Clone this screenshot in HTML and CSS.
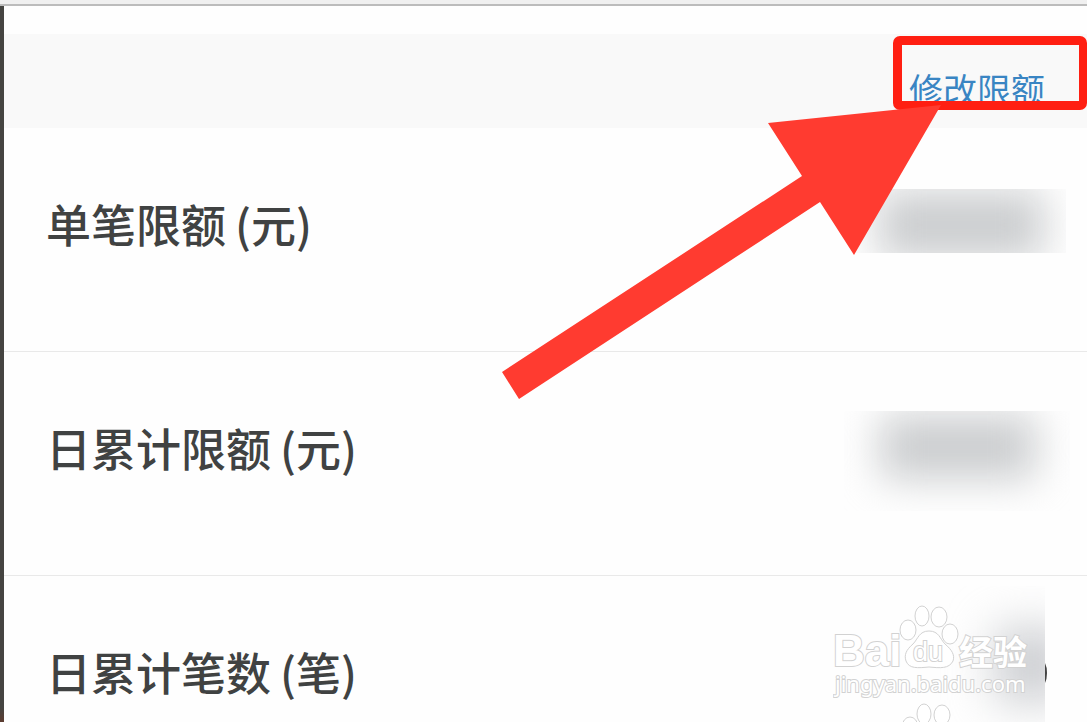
FILE: index.html
```
<!DOCTYPE html>
<html lang="zh-CN">
<head>
<meta charset="utf-8">
<title>修改限额</title>
<link rel="stylesheet" href="styles.css">
</head>
<body>
<div class="window-edge"></div>
<div class="frame">
  <div class="backdrop"></div>
  <main class="sheet">
    <header class="toolbar">
      <a class="edit-link" href="#">修改限额</a>
      <span class="highlight"></span>
    </header>
    <ul class="limits">
      <li class="limit">
        <span class="label">单笔限额<span class="unit">(元)</span></span>
        <span class="masked masked-single"><span class="smudge"></span></span>
      </li>
      <li class="limit">
        <span class="label">日累计限额<span class="unit">(元)</span></span>
        <span class="masked masked-daily"><span class="smudge"></span></span>
      </li>
      <li class="limit">
        <span class="label">日累计笔数<span class="unit">(笔)</span></span>
        <span class="masked masked-count"><span class="smudge"></span></span>
        <svg class="digit-edge" width="3" height="20" viewBox="0 0 3 20"><path d="M0 0Q2 4 2 10T0 20Z" fill="#444"/></svg>
      </li>
    </ul>
  </main>
</div>
<svg class="arrow" width="439" height="299" viewBox="0 0 439 299" aria-hidden="true">
  <path d="M439 5L266 23L300 76L0 272L17 299L318 102L352 155Z" fill="#ff3b30"/>
</svg>
<svg class="watermark" width="200" height="122" viewBox="0 0 200 122">
  <g class="outline">
    <text class="brand" x="0" y="66">Bai</text>
    <ellipse cx="75" cy="30" rx="8" ry="10"/>
    <ellipse cx="89" cy="16" rx="7" ry="10"/>
    <ellipse cx="106" cy="17" rx="8" ry="10"/>
    <ellipse cx="117" cy="34" rx="8" ry="10"/>
    <path d="M96 31C86 31 85 39 80 44C73 50 71 55 73 61C76 69 85 68 96 67C107 68 116 69 120 61C122 55 119 50 112 44C107 39 106 31 96 31Z"/>
    <text class="du" x="80" y="61">du</text>
    <text class="jingyan" x="126" y="65">经验</text>
    <text class="domain" x="2" y="92">jingyan.baidu.com</text>
    <ellipse cx="91" cy="114" rx="7" ry="10"/>
    <ellipse cx="109" cy="115" rx="8" ry="10"/>
    <ellipse cx="77" cy="127" rx="8" ry="10"/>
  </g>
</svg>
</body>
</html>
```
FILE: styles.css
```
* {
  box-sizing: border-box;
}

body {
  position: relative;
  display: flex;
  flex-direction: column;
  min-height: 100vh;
  margin: 0;
  background: #fefefe;
  color: #404242;
  font-family: "Noto Sans CJK SC", sans-serif;
}

.window-edge {
  flex: none;
  height: 6px;
  border-bottom: 2px solid #bcbcbc;
  background: #f0f0f0;
}

.frame {
  display: flex;
  flex: 1;
}

.backdrop {
  flex: none;
  width: 4px;
  background: linear-gradient(#454441 98%, #5c3c30);
}

.sheet {
  flex: 1;
  padding-top: 28px;
}

.toolbar {
  position: relative;
  display: flex;
  justify-content: flex-end;
  align-items: flex-end;
  height: 94px;
  padding: 0 42px 22px 0;
  background: #f9f9f9;
}

.edit-link {
  color: #3985c3;
  font-size: 34px;
  line-height: 34px;
  text-decoration: none;
}

.highlight {
  position: absolute;
  top: 2px;
  right: 0;
  width: 194px;
  height: 74px;
  border: 9px solid #ff1f12;
  border-right-width: 8px;
  border-radius: 7px;
}

.limits {
  margin: 0;
  padding: 0;
  list-style: none;
}

.limit {
  position: relative;
  height: 224px;
  padding: 66px 42px 0;
  border-bottom: 1px solid #e9e9e9;
}

.limit:last-child {
  height: 146px;
  border-bottom: 0;
}

.label {
  font-size: 45px;
  font-weight: 500;
  line-height: 60px;
}

.unit {
  margin-left: 9px;
}

.masked {
  position: absolute;
  overflow: hidden;
}

.smudge {
  position: absolute;
  background: #cbcdcf;
  filter: blur(20px);
}

.masked-single {
  top: 61px;
  right: 21px;
  width: 210px;
  height: 64px;
}

.masked-single .smudge {
  inset: 2px 22px -6px 22px;
}

.masked-daily {
  top: 59px;
  right: 17px;
  width: 226px;
  height: 100px;
}

.masked-daily .smudge {
  inset: 4px 34px 32px 36px;
}

.masked-count {
  top: 10px;
  right: 42px;
  width: 150px;
  height: 136px;
}

.masked-count .smudge {
  inset: 44px -20px 22px 102px;
  background: #c6c8cc;
  filter: blur(24px);
}

.digit-edge {
  position: absolute;
  top: 87px;
  right: 39px;
}

.arrow {
  position: absolute;
  top: 100px;
  right: 146px;
}

.watermark {
  position: absolute;
  top: 600px;
  right: 54px;
}

.outline {
  fill: #fff;
  stroke: #d2d2d2;
  stroke-width: 1px;
}

.outline text {
  paint-order: stroke;
  stroke-width: 2px;
}

.brand {
  font: 700 44px "Liberation Sans", sans-serif;
}

.du {
  font: 400 27px "Liberation Sans", sans-serif;
}

.jingyan {
  font: 700 34px "Noto Sans CJK SC", sans-serif;
}

.domain {
  font: 400 22px "Noto Sans", sans-serif;
}
```
